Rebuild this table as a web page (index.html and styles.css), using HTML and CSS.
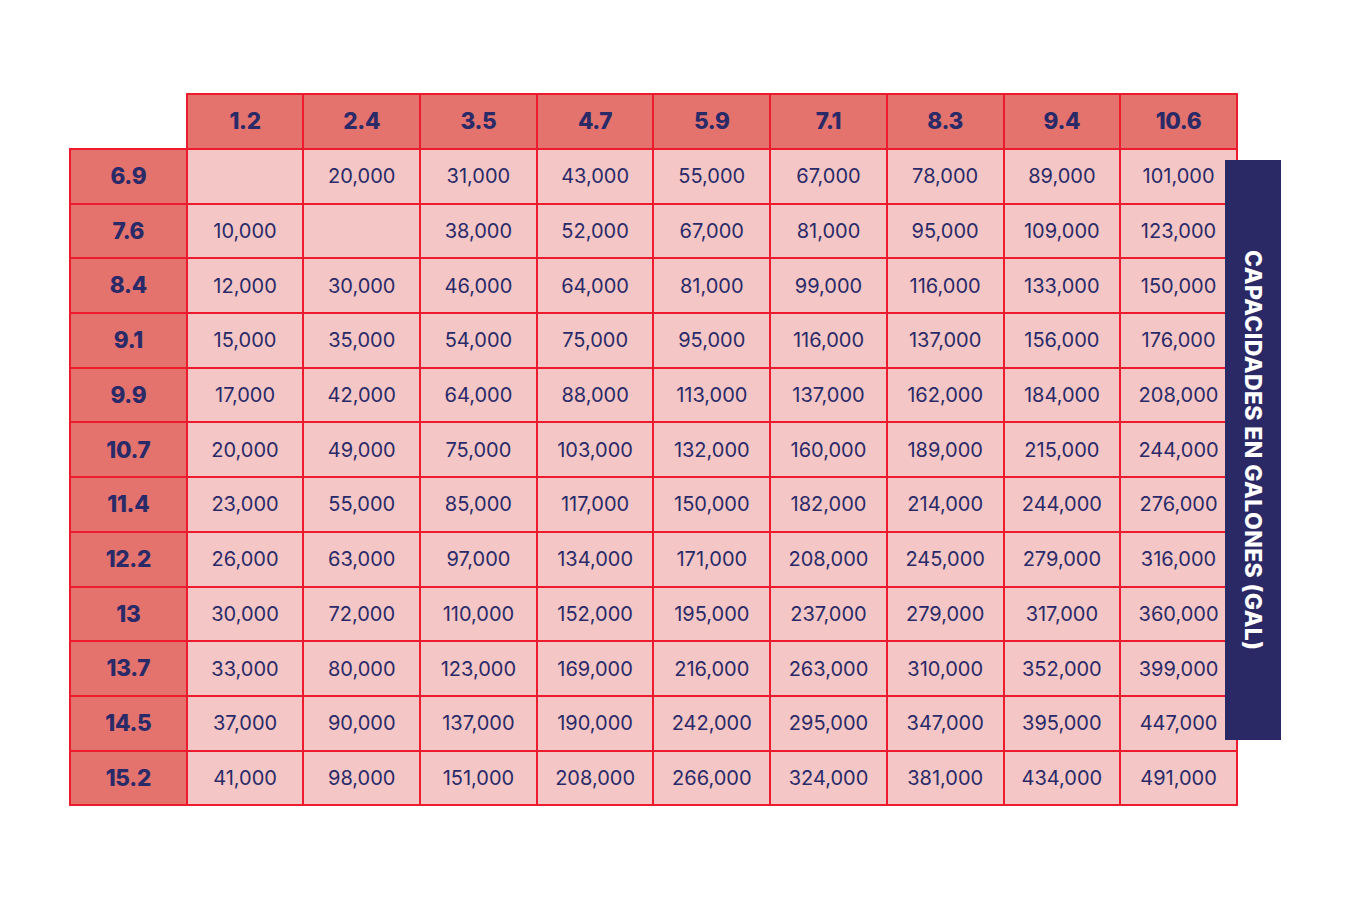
FILE: index.html
```html
<!DOCTYPE html>
<html lang="es">
<head>
<meta charset="utf-8">
<title>Capacidades en galones</title>
<link rel="stylesheet" href="styles.css">
</head>
<body>
<div class="page">
  <table class="cap">
    <thead>
      <tr>
        <th class="corner"></th>
        <th>1.2</th><th>2.4</th><th>3.5</th><th>4.7</th><th>5.9</th><th>7.1</th><th>8.3</th><th>9.4</th><th>10.6</th>
      </tr>
    </thead>
    <tbody>
      <tr><th>6.9</th><td></td><td>20,000</td><td>31,000</td><td>43,000</td><td>55,000</td><td>67,000</td><td>78,000</td><td>89,000</td><td>101,000</td></tr>
      <tr><th>7.6</th><td>10,000</td><td></td><td>38,000</td><td>52,000</td><td>67,000</td><td>81,000</td><td>95,000</td><td>109,000</td><td>123,000</td></tr>
      <tr><th>8.4</th><td>12,000</td><td>30,000</td><td>46,000</td><td>64,000</td><td>81,000</td><td>99,000</td><td>116,000</td><td>133,000</td><td>150,000</td></tr>
      <tr><th>9.1</th><td>15,000</td><td>35,000</td><td>54,000</td><td>75,000</td><td>95,000</td><td>116,000</td><td>137,000</td><td>156,000</td><td>176,000</td></tr>
      <tr><th>9.9</th><td>17,000</td><td>42,000</td><td>64,000</td><td>88,000</td><td>113,000</td><td>137,000</td><td>162,000</td><td>184,000</td><td>208,000</td></tr>
      <tr><th>10.7</th><td>20,000</td><td>49,000</td><td>75,000</td><td>103,000</td><td>132,000</td><td>160,000</td><td>189,000</td><td>215,000</td><td>244,000</td></tr>
      <tr><th>11.4</th><td>23,000</td><td>55,000</td><td>85,000</td><td>117,000</td><td>150,000</td><td>182,000</td><td>214,000</td><td>244,000</td><td>276,000</td></tr>
      <tr><th>12.2</th><td>26,000</td><td>63,000</td><td>97,000</td><td>134,000</td><td>171,000</td><td>208,000</td><td>245,000</td><td>279,000</td><td>316,000</td></tr>
      <tr><th>13</th><td>30,000</td><td>72,000</td><td>110,000</td><td>152,000</td><td>195,000</td><td>237,000</td><td>279,000</td><td>317,000</td><td>360,000</td></tr>
      <tr><th>13.7</th><td>33,000</td><td>80,000</td><td>123,000</td><td>169,000</td><td>216,000</td><td>263,000</td><td>310,000</td><td>352,000</td><td>399,000</td></tr>
      <tr><th>14.5</th><td>37,000</td><td>90,000</td><td>137,000</td><td>190,000</td><td>242,000</td><td>295,000</td><td>347,000</td><td>395,000</td><td>447,000</td></tr>
      <tr><th>15.2</th><td>41,000</td><td>98,000</td><td>151,000</td><td>208,000</td><td>266,000</td><td>324,000</td><td>381,000</td><td>434,000</td><td>491,000</td></tr>
    </tbody>
  </table>
  <div class="side-label"><span>CAPACIDADES EN GALONES (GAL)</span></div>
</div>
</body>
</html>
```
FILE: styles.css
```css
html, body {
  margin: 0;
  padding: 0;
  background: #ffffff;
}

.page {
  position: relative;
  width: 1350px;
  height: 900px;
  padding: 93px 0 0 69px;
  box-sizing: border-box;
  font-family: Inter, "Noto Sans", sans-serif;
  color: #2a2a68;
}

.cap {
  border-collapse: collapse;
  table-layout: fixed;
  width: 1167px;
}

.cap th,
.cap td {
  width: 116.7px;
  height: 54.7px;
  padding: 0;
  box-sizing: border-box;
  border: 2px solid #ec1c2e;
  text-align: center;
  vertical-align: middle;
  line-height: 1;
}

.cap th {
  background: #e4736e;
  font-size: 22.5px;
  font-weight: 800;
  letter-spacing: -0.3px;
}

.cap td {
  background: #f4c6c5;
  font-size: 20px;
  font-weight: 400;
}

.cap thead th {
  height: 55px;
}

.cap .corner {
  background: #ffffff;
  border-top: none;
  border-left: none;
}

.side-label {
  position: absolute;
  left: 1225px;
  top: 160px;
  width: 56px;
  height: 580px;
  background: #2b2866;
  display: flex;
  align-items: center;
  justify-content: center;
}

.side-label span {
  writing-mode: vertical-rl;
  color: #ffffff;
  font-size: 23px;
  font-weight: 800;
  letter-spacing: 0.4px;
  white-space: nowrap;
}
```
